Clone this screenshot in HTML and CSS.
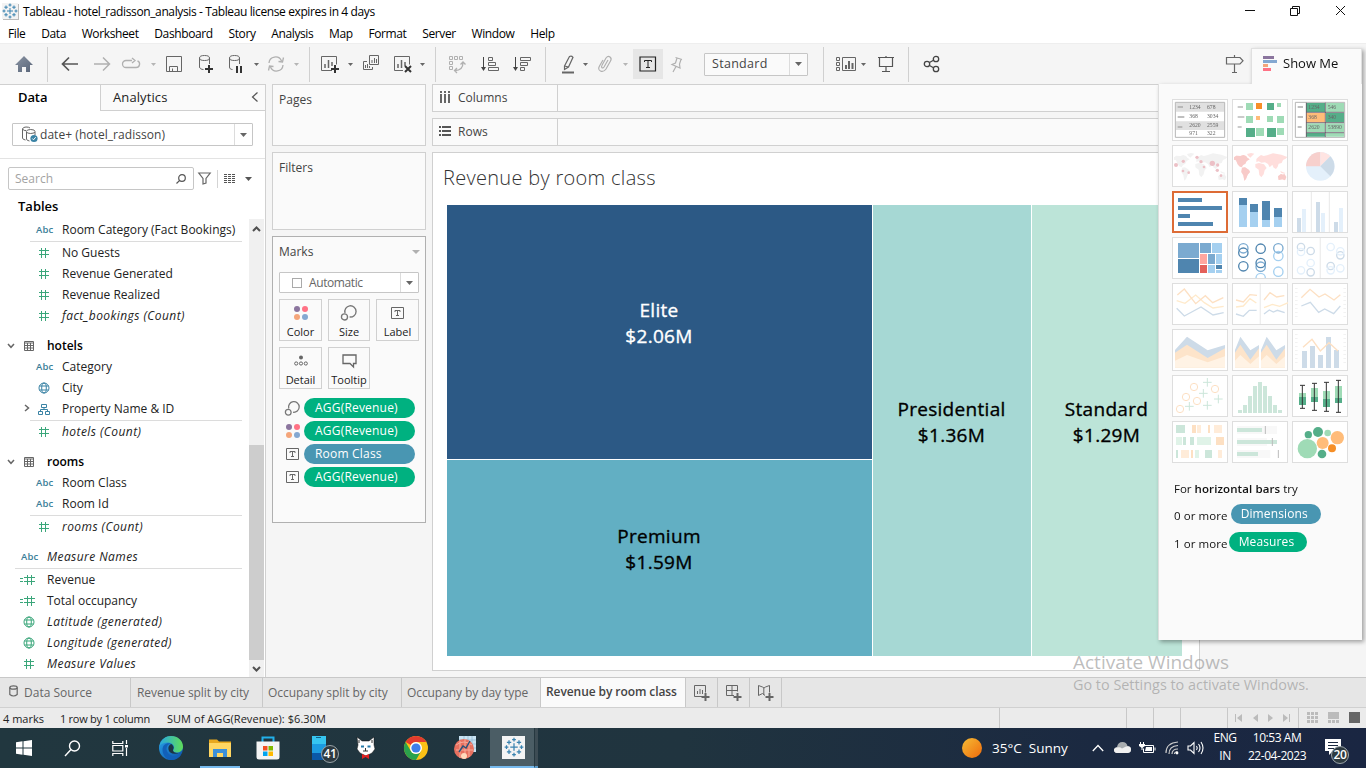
FILE: index.html
```html
<!DOCTYPE html>
<html lang="en">
<head>
<meta charset="utf-8">
<title>Tableau - hotel_radisson_analysis</title>
<link rel="stylesheet" href="styles.css">
</head>
<body>
<svg class="defs" width="0" height="0">
  <defs>
    <linearGradient id="edgeA" x1="0" y1="0" x2="1" y2="1"><stop offset="0" stop-color="#2aa5e8"/><stop offset="1" stop-color="#0c4fa8"/></linearGradient>
    <linearGradient id="edgeB" x1="0" y1="0" x2="1" y2="0"><stop offset="0" stop-color="#28a8e0"/><stop offset="1" stop-color="#5fdc58"/></linearGradient>
    <linearGradient id="sun" x1="0" y1="0" x2="1" y2="1"><stop offset="0" stop-color="#f6bd35"/><stop offset="1" stop-color="#ef6a0c"/></linearGradient>
    <linearGradient id="homeFill" x1="0" y1="0" x2="1" y2="1"><stop offset="0" stop-color="#8a94a3"/><stop offset="1" stop-color="#586478"/></linearGradient>
    <symbol id="caret" viewBox="0 0 5 3"><path d="M0 0h5L2.5 3z" fill="currentColor"/></symbol>
    <symbol id="caret-lg" viewBox="0 0 7 4"><path d="M0 0h7L3.500 4z" fill="currentColor"/></symbol>
    <symbol id="hash" viewBox="0 0 12 12"><path d="M1 3.500h10M1 7.500h10M3.500 1v10M7.500 1v10" stroke="#3aa67a" fill="none"/></symbol>
    <symbol id="calc" viewBox="0 0 16 12"><path d="M0 4.500h3M0 7.500h3M4 3.500h11M4 7.500h11M7.500 1v10M11.500 1v10" stroke="#3aa67a" fill="none"/></symbol>
    <symbol id="globe" viewBox="0 0 12 12"><g fill="none" stroke="currentColor"><circle cx="6" cy="6" r="5"/><ellipse cx="6" cy="6" rx="2.300" ry="5"/><path d="M1.500 4h9M1.500 8h9"/></g></symbol>
    <symbol id="table" viewBox="0 0 10 10"><path d="M.5.5h9v9h-9zM.5 2h9M.5 4.500h9M.5 7h9M3.500 2v7.500M6.500 2v7.500" fill="none" stroke="#666"/></symbol>
    <symbol id="chev" viewBox="0 0 8 6"><path d="M1 1l3 3.300L7 1" fill="none" stroke="#666" stroke-width="1.500"/></symbol>
    <symbol id="sizeicon" viewBox="0 0 16 16"><g fill="none" stroke="#777" stroke-width="1.200"><path d="M4.500 8A5 5 0 1 1 8.500 11.500"/><circle cx="4" cy="11.500" r="2.700"/></g></symbol>
    <symbol id="dots" viewBox="0 0 16 16"><circle cx="4" cy="4" r="3" fill="#8b759e"/><circle cx="12" cy="4" r="3" fill="#ff7285"/><circle cx="4" cy="12" r="3" fill="#f4a57a"/><circle cx="12" cy="12" r="3" fill="#84a8d1"/></symbol>
    <symbol id="tbox" viewBox="0 0 14 12"><path d="M.5.5h12v11h-12zM4 5V3.500h5V5M6.500 3.500v5M5 8.500h3" fill="none" stroke="#666"/></symbol>
    <symbol id="tablogo" viewBox="0 0 16 16"><path d="M8 5v6M5 8h6M8 .5v3M6.500 2h3M8 12.500v3M6.500 14h3M.5 8h3M2 6.500v3M12.500 8h3M14 6.500v3M4 2.500v3.500M2.300 4.200h3.500M12 2.500v3.500M10.200 4.200h3.500M4 10v3.500M2.300 11.800h3.500M12 10v3.500M10.200 11.800h3.500" stroke="#3a83b0" fill="none"/></symbol>
    <symbol id="world" viewBox="0 0 168 126"><path d="M6 37l7-5 12 1 9-3 8 3 4 5 7 5-9 5-4 8-7 4-4 7-7-3-5-6-5-12-6-2zM45 27l12-3 10 2-7 7-5 5-7-6zM30 68l9-1 12 8 3 6-7 8-5 13-5 5-3-16-6-10zM73 42l6-6 8-6 8 3 10-2 18-6 25 4 18 7-5 5-8 4-4 9-9 2-3 9-5 7-7-4-4-9-8 8-5-10-9-5-11 1-8-4-7 2zM70 57l11-3 15 4 8 11-6 7-3 12-7 9-6-7-2-16-10-7zM145 77l5 3 10 4-3 2-10-3zM138 94l9-7 6 2 4-2 6 9-4 10-8-3-11 2z" fill="currentColor"/></symbol>
  </defs>
</svg>

<div class="app">
  <header class="titlebar">
    <svg class="app-logo" width="16" height="16"><use href="#tablogo"/></svg>
    <span class="window-title">Tableau - hotel_radisson_analysis - Tableau license expires in 4 days</span>
    <svg class="win-controls" width="112" height="20" fill="none" stroke="#111"><path d="M5 9.500h10M50.500 7.500h7v7h-7zM52.500 7.500v-2h7v7h-2M96 5l9 9M105 5l-9 9"/></svg>
  </header>
  <nav class="menubar"><span>File</span><span>Data</span><span>Worksheet</span><span>Dashboard</span><span>Story</span><span>Analysis</span><span>Map</span><span>Format</span><span>Server</span><span>Window</span><span>Help</span></nav>

  <div class="toolbar">
    <svg width="18" height="16"><path d="M9 0L18 9h-3v7h-4v-5H7v5H3V9H0z" fill="url(#homeFill)"/></svg>
    <i class="sep"></i>
    <svg width="18" height="16" fill="none" stroke="#555" stroke-width="1.700"><path d="M17 8H2M8 1.500L1.500 8L8 14.500"/></svg>
    <svg width="18" height="16" fill="none" stroke="#b0b0b0" stroke-width="1.500"><path d="M1 8h15M10 1.500L16.500 8L10 14.500"/></svg>
    <svg width="20" height="14" fill="none" stroke="#b0b0b0" stroke-width="1.300"><path d="M11 3.500H5a3.500 3.500 0 0 0 0 7h10a3.500 3.500 0 0 0 1.500-6.700M11 1l3 2.500L11 6"/></svg>
    <svg class="off" width="5" height="3"><use href="#caret"/></svg>
    <svg width="17" height="17" fill="none" stroke="#666"><path d="M.5.5h15v15h-15zM3.500 15.500v-5h8v5M6.500 12.500v3"/></svg>
    <svg width="16" height="20" fill="none" stroke="#666"><ellipse cx="7.500" cy="4" rx="5" ry="2.500"/><path d="M2.500 4v9c0 1.500 2 2.500 4 2.500M12.500 4v6"/><path d="M12 11v8M8 15h8" stroke="#333" stroke-width="2"/></svg>
    <svg width="16" height="20" fill="none" stroke="#666"><ellipse cx="7.500" cy="4" rx="5" ry="2.500"/><path d="M2.500 4v9c0 1.500 1 2.500 3 2.500M12.500 4v6"/><path d="M10 12v7M14 12v7" stroke="#333" stroke-width="2"/></svg>
    <svg width="5" height="3"><use href="#caret"/></svg>
    <svg width="18" height="16" fill="none" stroke="#b0b0b0" stroke-width="1.300"><path d="M2 7a6.500 6.500 0 0 1 12.500-2M16 9a6.500 6.500 0 0 1-12.500 2M16.500 1.500L15.500 6l-4-.5M1.500 14.500l1-4.500 4 .5"/></svg>
    <svg class="off" width="5" height="3"><use href="#caret"/></svg>
    <i></i><i class="sep"></i><i></i>
    <svg width="20" height="18" fill="none" stroke="#666"><path d="M12 15.500H1.500v-14h15v8"/><path d="M5 9v4M8.500 5v8M12 7v4" stroke-width="1.500"/><path d="M15 10v8M11 14h8" stroke="#333" stroke-width="2"/></svg>
    <svg width="5" height="3"><use href="#caret"/></svg>
    <svg width="18" height="18" fill="none" stroke="#666"><path d="M7.500.5h9v9h-9zM5 6.500H1.500v8h9V12M10 5v3M12.500 3v5M14.500 4v4M3.500 10v3M5.500 9v4M7.500 11v2"/></svg>
    <svg width="20" height="18" fill="none" stroke="#666"><path d="M10 15.500H1.500v-14h15v8"/><path d="M5 9v4M8.500 5v8M12 7v4" stroke-width="1.500"/><path d="M12 11l6 6M18 11l-6 6" stroke="#333" stroke-width="2"/></svg>
    <svg width="5" height="3"><use href="#caret"/></svg>
    <i></i><i class="sep"></i>
    <svg width="18" height="18" fill="none" stroke="#b0b0b0"><path d="M1.500 1.500h3v3h-3zM6.500 1.500h3v3h-3zM11.500 1.500h3v3h-3zM1.500 6.500h3v3h-3zM1.500 11.500h3v3h-3z"/><path d="M15 7.500q0 8-8 8M12.500 9.500L15 7l2.500 2.500M9 13l-2.500 2.500L9 18" stroke-width="1.300"/></svg>
    <svg width="18" height="18" fill="none" stroke="#666"><path d="M2.500 2v12" stroke="#444"/><path d="M0 12h5l-2.500 4z" fill="#444" stroke="none"/><path d="M7.500 2.500h4v3h-4zM7.500 7.500h7v3h-7zM7.500 12.500h10v3h-10z"/></svg>
    <svg width="18" height="18" fill="none" stroke="#666"><path d="M2.500 2v12" stroke="#444"/><path d="M0 12h5l-2.500 4z" fill="#444" stroke="none"/><path d="M7.500 2.500h10v3h-10zM7.500 7.500h7v3h-7zM7.500 12.500h4v3h-4z"/></svg>
    <i></i><i class="sep"></i><i></i>
    <svg width="14" height="19" fill="none" stroke="#666" stroke-width="1.200"><path d="M3.500 11L8.500 1.500q2-1 3.500.8L7.500 12l-4 2.500zM3.500 11l4 1"/><path d="M1 17.500h12" stroke-width="2"/></svg>
    <svg width="5" height="3"><use href="#caret"/></svg>
    <svg width="14" height="18" fill="none" stroke="#b0b0b0" stroke-width="1.200"><path d="M10 5l-4 7q-1 1.500-2 .7t0-2.500L8 3q2-2.500 4-1t.5 4L8 14q-2.500 3.500-5.500 2t-1-5L5 5"/></svg>
    <svg class="off" width="5" height="3"><use href="#caret"/></svg>
    <i></i>
    <div class="label-toggle"><svg width="18" height="16" fill="none" stroke="#222"><path d="M1 1h15.500v14H1z" stroke-width="1.200"/><path d="M5.500 6V4.500h7V6M9 4.500v7M7 11.500h4"/></svg></div>
    <svg width="14" height="17" fill="none" stroke="#b0b0b0" stroke-width="1.200"><path d="M5.500 1.500l6.500 2M7 2L5.500 7 2 8.500l8 3.500-.5-4L11 3.500M6 10.500L3 16"/></svg>
    <i></i>
    <div class="combo fit-combo"><span>Standard</span><b><svg width="7" height="4"><use href="#caret-lg"/></svg></b></div>
    <i></i><i class="sep"></i><i></i>
    <svg width="21" height="16" fill="none" stroke="#666"><path d="M.5 1.500h3v3h-3zM.5 6.500h3v3h-3zM.5 11.500h3v3h-3zM6.500 1.500h13v13h-13z"/><path d="M10 9v4M13 5v8M16.500 7v6" stroke-width="2"/></svg>
    <svg width="5" height="3"><use href="#caret"/></svg>
    <svg width="18" height="17" fill="none" stroke="#555"><path d="M1 1.500h16M2.500 1.500v9h13v-9M9 10.500v5M5 15.500h8M9 0v1" stroke-width="1.200"/></svg>
    <i class="sep"></i>
    <svg width="16" height="18" fill="none" stroke="#444" stroke-width="1.300"><circle cx="4" cy="9" r="2.700"/><circle cx="13" cy="4" r="2.700"/><circle cx="13" cy="14" r="2.700"/><path d="M6.500 7.500l4-2.200M6.500 10.500l4 2.200"/></svg>
    <i></i>
    <svg width="20" height="20" fill="none" stroke="#666" stroke-width="1.200"><path d="M1.500 3.500H15l3 3.300-3 3.200H1.500zM9.500 1v2.500M9.500 10v8.500M7 18.500h5"/></svg>
  </div>

  <main class="workspace">
    <aside class="data-pane">
      <div class="pane-tabs"><div class="pane-tab current">Data</div><div class="pane-tab">Analytics<svg width="8" height="12" fill="none" stroke="#555" stroke-width="1.200"><path d="M6.500 1.500L1.500 6l5 4.500"/></svg></div></div>
      <div class="source-zone">
        <div class="combo source-combo">
          <svg width="18" height="17" fill="none" stroke="#666"><path d="M1.500 3v9q0 1.500 3 2M1.500 3Q2 1 5 1t4 1M1.500 3Q3 5 5 4.500M5.500 6v7q0 1.500 3 2M14 6v3"/><ellipse cx="9.700" cy="5.500" rx="4.300" ry="2"/><circle cx="13" cy="12.500" r="3.600" fill="#3a83a5" stroke="none"/><path d="M11.300 12.500l1.200 1.300 2.200-2.600" stroke="#fff"/></svg>
          <span>date+ (hotel_radisson)</span><b><svg width="7" height="4"><use href="#caret-lg"/></svg></b>
        </div>
      </div>
      <div class="search-row">
        <div class="search-box">Search<svg width="10" height="10" fill="none" stroke="#555" stroke-width="1.200"><circle cx="6" cy="4" r="3.300"/><path d="M3.700 6.300L.5 9.500"/></svg></div>
        <svg width="13" height="13" fill="none" stroke="#666" stroke-width="1.200"><path d="M.8 1h11.400L8 6.500V11l-3 1V6.500z"/></svg>
        <i></i>
        <svg width="12" height="10" stroke="#555" stroke-dasharray="3 1"><path d="M0 .5h12"/><path d="M0 2.500h12"/><path d="M0 4.500h12"/><path d="M0 6.500h12"/><path d="M0 8.500h12"/></svg>
        <svg class="view-caret" width="7" height="4"><use href="#caret-lg"/></svg>
      </div>
      <h3>Tables</h3>
      <div class="list-zone">
        <div class="field-list">
          <div class="field"><em>Abc</em><span>Room Category (Fact Bookings)</span></div>
          <div class="rule"></div>
          <div class="field"><em><svg width="12" height="12"><use href="#hash"/></svg></em><span>No Guests</span></div>
          <div class="field"><em><svg width="12" height="12"><use href="#hash"/></svg></em><span>Revenue Generated</span></div>
          <div class="field"><em><svg width="12" height="12"><use href="#hash"/></svg></em><span>Revenue Realized</span></div>
          <div class="field gen"><em><svg width="12" height="12"><use href="#hash"/></svg></em><span>fact_bookings (Count)</span></div>
          <div class="group"><svg width="8" height="6"><use href="#chev"/></svg><svg width="10" height="10"><use href="#table"/></svg><span>hotels</span></div>
          <div class="field"><em>Abc</em><span>Category</span></div>
          <div class="field"><em class="dim"><svg width="12" height="12"><use href="#globe"/></svg></em><span>City</span></div>
          <div class="field"><svg class="expander" width="6" height="8" fill="none" stroke="#666" stroke-width="1.500"><path d="M1 1l3.500 3L1 7"/></svg><em class="dim"><svg width="12" height="12" fill="none" stroke="currentColor"><path d="M3.500 1.500h5v3h-5zM.5 8.500h4v3h-4zM7.500 8.500h4v3h-4zM6 4.500v2M2.500 8.500v-2h7v2"/></svg></em><span>Property Name &amp; ID</span></div>
          <div class="rule"></div>
          <div class="field gen"><em><svg width="12" height="12"><use href="#hash"/></svg></em><span>hotels (Count)</span></div>
          <div class="group"><svg width="8" height="6"><use href="#chev"/></svg><svg width="10" height="10"><use href="#table"/></svg><span>rooms</span></div>
          <div class="field"><em>Abc</em><span>Room Class</span></div>
          <div class="field"><em>Abc</em><span>Room Id</span></div>
          <div class="rule"></div>
          <div class="field gen"><em><svg width="12" height="12"><use href="#hash"/></svg></em><span>rooms (Count)</span></div>
          <div class="loose">
            <div class="field gen"><em>Abc</em><span>Measure Names</span></div>
            <div class="rule"></div>
            <div class="field"><em><svg class="calc" width="16" height="12"><use href="#calc"/></svg></em><span>Revenue</span></div>
            <div class="field"><em><svg class="calc" width="16" height="12"><use href="#calc"/></svg></em><span>Total occupancy</span></div>
            <div class="field gen"><em class="mea"><svg width="12" height="12"><use href="#globe"/></svg></em><span>Latitude (generated)</span></div>
            <div class="field gen"><em class="mea"><svg width="12" height="12"><use href="#globe"/></svg></em><span>Longitude (generated)</span></div>
            <div class="field gen"><em><svg width="12" height="12"><use href="#hash"/></svg></em><span>Measure Values</span></div>
          </div>
        </div>
        <div class="scrollbar"><svg width="9" height="6" fill="none" stroke="#505050" stroke-width="2"><path d="M1 5l3.500-3.500L8 5"/></svg><div class="thumb"></div><svg width="9" height="6" fill="none" stroke="#505050" stroke-width="2"><path d="M1 1l3.500 3.500L8 1"/></svg></div>
      </div>
    </aside>

    <section class="cards">
      <div class="card pages">Pages</div>
      <div class="card filters">Filters</div>
      <div class="card marks">
        <div class="marks-head">Marks<svg width="8" height="4"><path d="M0 0h8L4 4z" fill="#b0b0b0"/></svg></div>
        <div class="combo mark-type"><i></i><span>Automatic</span><b><svg width="7" height="4"><use href="#caret-lg"/></svg></b></div>
        <div class="mark-grid">
          <div><svg width="16" height="16"><use href="#dots"/></svg>Color</div>
          <div><svg width="18" height="18"><use href="#sizeicon"/></svg>Size</div>
          <div><svg width="14" height="12"><use href="#tbox"/></svg>Label</div>
          <div><svg width="14" height="12" fill="none" stroke="#666"><circle cx="7" cy="2.500" r="2" fill="#666" stroke="none"/><circle cx="2.200" cy="8.500" r="1.600"/><circle cx="7" cy="8.500" r="1.600"/><circle cx="11.800" cy="8.500" r="1.600"/></svg>Detail</div>
          <div><svg width="15" height="14" fill="none" stroke="#666" stroke-width="1.300"><path d="M1 1h13v8.500h-2.500V13L8 9.500H1z"/></svg>Tooltip</div>
        </div>
        <div class="pill-list">
          <div><svg width="17" height="17"><use href="#sizeicon"/></svg><span class="pill green">AGG(Revenue)</span></div>
          <div><svg width="16" height="16"><use href="#dots"/></svg><span class="pill green">AGG(Revenue)</span></div>
          <div><svg width="14" height="12"><use href="#tbox"/></svg><span class="pill blue">Room Class</span></div>
          <div><svg width="14" height="12"><use href="#tbox"/></svg><span class="pill green">AGG(Revenue)</span></div>
        </div>
      </div>
    </section>

    <section class="canvas">
      <div class="shelf"><div><svg width="12" height="13" fill="none" stroke="#666" stroke-width="2"><path d="M2 0v2M6 0v2M10 0v2M2 3v9M6 3v9M10 3v9"/></svg>Columns</div></div>
      <div class="shelf"><div><svg width="12" height="12" fill="none" stroke="#555" stroke-width="2"><path d="M0 1h2M0 5h2M0 9h2M3 1h9M3 5h9M3 9h9"/></svg>Rows</div></div>
      <div class="sheet">
        <h1>Revenue by room class</h1>
        <div class="treemap">
          <div class="tile elite">Elite<br>$2.06M</div>
          <div class="tile presidential">Presidential<br>$1.36M</div>
          <div class="tile standard">Standard<br>$1.29M</div>
          <div class="tile premium">Premium<br>$1.59M</div>
        </div>
      </div>
    </section>
  </main>

  <div class="sheet-tabs">
    <div class="stab source"><svg width="9" height="12" fill="none" stroke="#666" stroke-width="1.200"><ellipse cx="4.500" cy="2.500" rx="3.700" ry="1.700"/><path d="M.8 2.500v7q3.700 3 7.400 0v-7"/></svg>Data Source</div>
    <div class="stab t1">Revenue split by city</div>
    <div class="stab t2">Occupany split by city</div>
    <div class="stab t3">Occupany by day type</div>
    <div class="stab active">Revenue by room class</div>
    <div class="stab add"><svg width="16" height="16" fill="none" stroke="#666"><path d="M8 11.500H.5V.500h11v7M3.500 6v3M6 4v5M8.500 5v4"/><path d="M11.500 8v8M7.500 12h8" stroke-width="2"/></svg></div>
    <div class="stab add"><svg width="16" height="16" fill="none" stroke="#666"><path d="M8 10.500H.5V.500h11v6M6 .5v10M.5 5.500h11"/><path d="M11.500 8v8M7.500 12h8" stroke-width="2"/></svg></div>
    <div class="stab add"><svg width="16" height="16" fill="none" stroke="#666"><path d="M7 10.500l-2.500-2-4 2V.5l4 1.500L6 3l1.500-1 4-1.500v7M5.800 3v7"/><path d="M11.500 8v8M7.500 12h8" stroke-width="2"/></svg></div>
  </div>

  <div class="statusbar">
    <span class="s1">4 marks</span><span class="s2">1 row by 1 column</span><span class="s3">SUM of AGG(Revenue): $6.30M</span>
    <div class="status-cells"><i></i><i></i><i></i><i></i>
      <div class="nav"><svg width="58" height="8" fill="#bbb"><path d="M1 0h1v8H1zM8 0v8L3 4zM24 0v8l-5-4zM34 0v8l5-4zM49 0v8l5-4zM55 0h1v8h-1z"/></svg></div>
      <div class="views"><svg width="52" height="12"><path d="M0 0h3v3H0zM4 0h3v3H4zM8 0h3v3H8zM0 4h3v3H0zM4 4h3v3H4zM8 4h3v3H8zM0 8h3v3H0zM4 8h3v3H4zM8 8h3v3H8zM21 0h11v7H21zM21 8h3v3h-3zM25 8h3v3h-3zM29 8h3v3h-3z" fill="#bbb"/><path d="M42 0h11v11H42z" fill="#666"/></svg></div>
    </div>
  </div>

  <footer class="taskbar">
    <div class="task"><svg width="16" height="16" fill="#fff"><path d="M0 2.200L6.500 1.300v6.200H0zM7.500 1.200L16 0v7.500H7.500zM0 8.500h6.500v6.200L0 13.800zM7.500 8.500H16V16l-8.500-1.200z"/></svg></div>
    <div class="task"><svg width="17" height="17" fill="none" stroke="#fff" stroke-width="1.400"><circle cx="10.500" cy="6" r="5"/><path d="M7 9.500L1 16"/></svg></div>
    <div class="task"><svg width="17" height="17" fill="none" stroke="#fff" stroke-width="1.200"><path d="M.8 1v2.500h10V1M.8 16v-2.500h10V16M.8 5.500h10V11H.8zM14.500 0v4M14.500 8v8"/><path d="M14.500 5v2.500" stroke-width="3"/></svg></div>
    <div class="task"><svg width="26" height="26" viewBox="0 0 26 26"><circle cx="13" cy="13" r="12" fill="url(#edgeA)"/><path d="M1.500 11C3 4 8 1 13 1c7 0 12 5 12 10.500 0 4-3 6-6.500 6-3 0-4-1.500-3-3 2-3-1-7-5.500-7-4 0-7 1.500-8.500 3.500z" fill="url(#edgeB)"/><path d="M8.500 14c0-3 2-5 4-5.500-4-1-8 1-8 6.500 0 5 4 9.500 8.500 10 4 0 8-2 10-5-7 3-14 0-14.500-6z" fill="#1260b8"/><path d="M13 9c-2 1-3 3-2.500 5.500C11 18 15 20 22 18c-3 .5-7-.5-7-2.500s1-2 .5-3.500S14 9 13 9z" fill="#1c3543"/></svg></div>
    <div class="task run"><svg width="22" height="20"><path d="M0 1.500h8l2 2h12V18H0z" fill="#e8a81e"/><path d="M0 5h22v14H0z" fill="#ffd662"/><path d="M4 11h14v8h-4v-4H8v4H4z" fill="#3c8fd8"/></svg></div>
    <div class="task"><svg width="24" height="24"><path d="M6.500 6V1.500h11V6" stroke="#22b0ea" stroke-width="2" fill="none"/><path d="M.5 5.500h23V21q0 2.500-2.500 2.500H3Q.5 23.500.5 21z" fill="#f4f4f4"/><path d="M7 10h4.500v4.500H7z" fill="#f25022"/><path d="M12.500 10H17v4.500h-4.500z" fill="#7fba00"/><path d="M7 15.500h4.500V20H7z" fill="#00a4ef"/><path d="M12.500 15.500H17V20h-4.500z" fill="#ffb900"/></svg></div>
    <div class="task"><svg width="16" height="24"><path d="M1 0h14v12H1z" fill="#36c5f0"/><path d="M1 8h14v9H1z" fill="#1c9be0"/><path d="M1 17h14v7H1z" fill="#0a58a8"/><path d="M5 1.500h5" stroke="#126088"/></svg><b class="count">41</b></div>
    <div class="task"><svg width="20" height="22"><path d="M1 0l5 4h7l5-4v8l1 4-3 4-6 3-6-3-3-4 1-4z" fill="#fff" stroke="#111" stroke-width=".5"/><path d="M3 3v3M16 3v3M9.500 11v3M7 14h5" stroke="#333"/><path d="M5 9.500h3M11.500 9.500h3" stroke="#267baa" stroke-width="2"/><path d="M6 17l3.500 1.500L13 17v5l-3.500-2L6 22z" fill="#e32020"/></svg></div>
    <div class="task"><svg width="24" height="24"><circle cx="12" cy="12" r="12" fill="#fbc116"/><path d="M1.600 6A12 12 0 0 1 22.400 6H12a6 6 0 0 0-5.200 3z" fill="#e33b2e"/><path d="M1.600 6A12 12 0 0 0 12 24l5.200-9A6 6 0 0 1 6.800 15z" fill="#2ba24c"/><circle cx="12" cy="12" r="6" fill="#fff"/><circle cx="12" cy="12" r="4.600" fill="#3f7fe8"/></svg></div>
    <div class="task"><svg width="24" height="24"><path d="M6 0h17v16H6z" fill="#c8e2f2"/><path d="M6 4h17M6 8h17M6 12h17M11 0v16M15 0v16M19 0v16" stroke="#8cb4d0" stroke-width=".7"/><circle cx="11" cy="13" r="10" fill="#e8705f"/><path d="M3 9q8-6 16 0M3 14h17M7 5v17M12 3v20M16 5v16" stroke="#f6aa9a" fill="none"/><circle cx="11" cy="20" r="3" fill="#ffd9bc"/><path d="M6 16l4-6 3 2 4-7" stroke="#29547c" stroke-width="1.500" fill="none"/></svg></div>
    <div class="task front"><div class="tab-tile"><svg width="20" height="20"><use href="#tablogo"/></svg></div></div><i class="stack"></i>
    <div class="tray">
      <svg class="sun" width="20" height="20"><circle cx="10" cy="10" r="10" fill="url(#sun)"/></svg>
      <span class="weather">35°C&nbsp; Sunny</span>
      <svg class="t-up" width="12" height="8" fill="none" stroke="#fff" stroke-width="1.300"><path d="M.8 7L6 1.500 11.200 7"/></svg>
      <svg class="t-cloud" width="17" height="12"><path d="M3 11q-3-.5-3-3t3-3q1-5 5.500-5 4 0 5 4 3.500.5 3.500 3.500T14 11z" fill="#a9adb0"/><path d="M3 11q-3-.5-3-3 0-2 3-2.500 3-1 5 1l4-2q5-1 5 3 0 3-3 3.500z" fill="#f0f0f0"/></svg>
      <svg class="t-bat" width="17" height="12" fill="none" stroke="#fff"><path d="M5 3.500h9.500v7h-10v-4M16 5.500v3M1.500 0v2M4.500 0v2M3 5v3"/><path d="M0 2h6v2L3 6 0 4zM7 5h6v4H6z" fill="#fff" stroke="none"/></svg>
      <svg class="t-wifi" width="14" height="14" fill="none" stroke="#ccc" stroke-width="1.200"><path d="M1 12Q1 2 13 1M4 13Q4 5 13 4.500M7 13q0-5 6-5M9.500 13q0-2 3-2.500"/><circle cx="12" cy="12" r="1.400" fill="#fff" stroke="none"/></svg>
      <svg class="t-vol" width="18" height="14" fill="none" stroke="#fff" stroke-width="1.100"><path d="M1 5h2.500L7 1.500v11L3.500 9H1zM9.500 5q1.500 2 0 4M11.500 3q3 4 0 8M14 1q4 6 0 12"/></svg>
      <div class="lang">ENG<br>IN</div>
      <div class="clock">10:53 AM<br>22-04-2023</div>
      <div class="notes"><svg width="18" height="18"><path d="M0 0h16v12H8l-4 4v-4H0z" fill="#fff"/><path d="M3 3.500h10M3 6.500h10M3 9.500h6" stroke="#1b2940"/></svg><b class="count">20</b></div>
    </div>
  </footer>

  <section class="show-me">
    <div class="sm-tab"><svg width="15" height="16"><path d="M0 0h11v3H0z" fill="#8b759e"/><path d="M0 4h14v3H0z" fill="#84a8d1"/><path d="M0 8h5v3H0z" fill="#f4a57a"/><path d="M0 12h8v3H0z" fill="#ff7285"/></svg>Show Me</div>
    <div class="sm-body">
      <div class="thumbs">
        <svg viewBox="51 177 168 126"><path d="M61 187h148v105H61z" fill="#fff" stroke="#b5b5b5" stroke-width="3"/><path d="M63 189h144v26H63zM63 244h144v26H63z" fill="#e0e0e0"/><path d="M68 201h16M68 231h20M68 261h14" stroke="#aaa" stroke-width="5"/><g class="tiny"><text x="103" y="207">1234</text><text x="156" y="207">678</text><text x="103" y="235">368</text><text x="156" y="235">3034</text><text x="103" y="262">2620</text><text x="156" y="262">2559</text><text x="103" y="286">971</text><text x="156" y="286">322</text></g></svg>
        <svg viewBox="231 177 168 126"><path d="M248 201h16M248 231h20M248 261h12" stroke="#bbb" stroke-width="4"/><path d="M273 189h21v21h-21zM366 189h12v12h-12zM273 228h21v21h-21zM336 228h18v18h-18zM366 228h21v21h-21zM303 264h24v24h-24zM366 264h21v21h-21z" fill="#9fdbb6"/><path d="M336 189h21v21h-21zM273 264h27v27h-27zM336 264h27v27h-27z" fill="#55ae89"/><path d="M303 189h18v18h-18z" fill="#f68f27"/><path d="M303 228h12v12h-12z" fill="#ffbc79"/></svg>
        <svg viewBox="411 177 168 126"><path d="M421 187h148v105H421z" fill="#fff" stroke="#b5b5b5" stroke-width="3"/><path d="M453 189h57v27h-57zM513 219h54v28h-54zM453 279h57v11h-57z" fill="#55ae89"/><path d="M513 189h54v27h-54zM453 250h57v26h-57zM513 250h54v26h-54zM513 279h54v11h-54z" fill="#9fdbb6"/><path d="M453 219h57v28h-57z" fill="#ffbc79"/><path d="M511 188v103M453 217h114M453 248h114M453 278h114M454 188v103" stroke="#656" stroke-width="2.500"/><path d="M428 201h16M428 231h16M428 261h12" stroke="#aaa" stroke-width="4"/><g class="tiny"><text x="460" y="207">1234</text><text x="518" y="207">546</text><text x="460" y="238">368</text><text x="518" y="238">340</text><text x="460" y="267">2620</text><text x="518" y="267">53890</text></g></svg>
        <svg class="map-gray" viewBox="0 0 168 126"><use href="#world"/><g fill="#ecc0c6"><circle cx="12" cy="60" r="6"/><circle cx="34" cy="49" r="5"/><circle cx="75" cy="37" r="5"/><circle cx="87" cy="50" r="5"/><circle cx="121" cy="55" r="8"/><circle cx="137" cy="60" r="5"/><circle cx="136" cy="76" r="5"/><circle cx="147" cy="92" r="4"/><circle cx="33" cy="78" r="4"/><circle cx="50" cy="83" r="4"/><circle cx="96" cy="66" r="4"/></g></svg>
        <svg class="map-pink" viewBox="0 0 168 126"><use href="#world"/><path d="M6 37l7-5 12 1 9-3 8 3 4 5 7 5-9 5-4 8-7 4-4 7-7-3-5-6-5-12-6-2zM30 68l9-1 12 8 3 6-7 8-5 13-5 5-3-16-6-10zM138 94l9-7 6 2 4-2 6 9-4 10-8-3-11 2z" fill="#f8cbc9"/></svg>
        <svg viewBox="411 315 168 126"><circle cx="496" cy="379" r="43" fill="#e4f0fb"/><path d="M496 379h-43a43 43 0 0 1 43-43z" fill="#f7d0cd"/><path d="M496 379v-43a43 43 0 0 1 30 13z" fill="#ffe4e2"/><path d="M496 379l30-30a43 43 0 0 1 0 60z" fill="#cddbe8"/></svg>
        <svg class="selected" viewBox="51 453 168 126"><path d="M69 474h72v12H69zM69 498h132v12H69zM69 522h36v12H69zM69 546h105v12H69z" fill="#4f85af"/></svg>
        <svg viewBox="231 453 168 126"><path d="M252 495h24v66h-24zM285 516h24v45h-24zM321 540h24v21h-24zM357 531h24v30h-24z" fill="#a5d0f0"/><path d="M252 474h24v21h-24zM285 492h24v24h-24zM321 483h24v57h-24zM357 504h24v27h-24z" fill="#4f85af"/></svg>
        <svg viewBox="411 453 168 126"><path d="M469 456v120M523 456v120" stroke="#e8e8e8" stroke-width="3"/><path d="M426 534h12v42h-12zM483 486h12v90h-12zM537 546h12v30h-12z" fill="#cddbe8"/><path d="M441 507h12v69h-12zM498 519h12v57h-12zM552 504h12v72h-12z" fill="#e4f0fb"/></svg>
        <svg viewBox="51 21 168 126"><path d="M69 39h63v45H69zM135 39h33v30h-33zM159 72h21v30h-21z" fill="#7baad0"/><path d="M69 87h63v42H69zM183 105h18v12h-18z" fill="#4f85af"/><path d="M171 39h30v30h-30zM183 72h18v30h-18zM159 105h21v24h-21zM183 120h18v9h-18z" fill="#a5d0f0"/><path d="M135 72h21v30h-21z" fill="#ffa69f"/><path d="M135 105h21v24h-21z" fill="#e3605a"/></svg>
        <svg class="rings" viewBox="231 21 168 126"><g stroke="#7baad0"><circle cx="265" cy="55" r="14"/><circle cx="370" cy="55" r="14"/><circle cx="317" cy="110" r="14"/></g><g stroke="#4f85af"><circle cx="265" cy="68" r="14"/><circle cx="265" cy="109" r="14"/><circle cx="317" cy="56" r="14"/><circle cx="317" cy="99" r="14"/></g><g stroke="#a5d0f0"><circle cx="370" cy="78" r="14"/><circle cx="370" cy="125" r="14"/><path d="M303 144a14 14 0 0 1 28 0"/></g></svg>
        <svg class="rings" viewBox="411 21 168 126"><path d="M496 24v120" stroke="#eee"/><g stroke="#cddbe8"><circle cx="438" cy="51" r="11"/><circle cx="467" cy="63" r="11"/><circle cx="467" cy="127" r="11"/><circle cx="556" cy="76" r="11"/><circle cx="527" cy="108" r="11"/></g><g stroke="#e4f0fb"><circle cx="438" cy="66" r="11"/><circle cx="438" cy="121" r="11"/><circle cx="467" cy="99" r="11"/><circle cx="527" cy="51" r="11"/><circle cx="556" cy="64" r="11"/><circle cx="527" cy="121" r="11"/><circle cx="556" cy="115" r="11"/></g></svg>
        <svg class="lines" viewBox="51 159 168 126"><path d="M65 212l25 8 32-25 26 23 26 16 32-5" stroke="#ffeacb"/><path d="M67 195l21-18 34 44 29-24 22 21 32-15" stroke="#fde0c3"/><path d="M65 235l23 23 50-27 36 24 32-7" stroke="#cddbe8"/></svg>
        <svg class="lines" viewBox="231 159 168 126"><path d="M316 162v120" stroke="#eee"/><path d="M243 231l22-3 20-22 19 13M327 233l25-10 22 6 28-12" stroke="#ffeacb"/><path d="M243 210l22 6 20-22 21 2M327 210l18-22 20 13 23-4" stroke="#fde0c3"/><path d="M243 252l22 7 18-18h22M327 252l16-12 12 6 12-5 22 7" stroke="#cddbe8"/></svg>
        <svg class="lines" viewBox="411 159 168 126"><path d="M439 203l26-25 27 23 18-9 27 18 19-16" stroke="#fde0c3"/><path d="M439 228l27-11 25 30 18-10 27 14 20-23" stroke="#cddbe8"/><path d="M424 174v95M569 174v95" stroke="#eee" stroke-width="8" stroke-dasharray="2 10"/></svg>
        <svg viewBox="51 297 168 126"><path d="M60 360l36-40 62 41 52-16v68H60z" fill="#cddbe8"/><path d="M60 368l36-24 62 40 52-29v58H60z" fill="#fde4ca"/><path d="M60 392l36-17 62 22 52-18v34H60z" fill="#fff3e5"/></svg>
        <svg viewBox="231 297 168 126"><path d="M240 360l16-40 30 41 26-16v68h-72zM318 360l17-40 29 41 26-16v68h-72z" fill="#cddbe8"/><path d="M240 368l16-24 30 45 26-34v58h-72zM318 368l17-24 29 45 26-34v58h-72z" fill="#fde4ca"/><path d="M240 392l16-17 30 27 26-23v34h-72zM318 392l17-17 29 27 26-23v34h-72z" fill="#fff3e5"/></svg>
        <svg class="lines" viewBox="411 297 168 126"><path d="M441 363h15v51h-15zM465 348h15v66h-15zM489 375h15v39h-15zM513 321h15v93h-15zM537 360h15v54h-15z" fill="#cddbe8"/><path d="M444 352l27-24 25 35 26-25 27 25" stroke="#fde0c3"/><path d="M424 312v95M569 312v95" stroke="#eee" stroke-width="8" stroke-dasharray="2 10"/></svg>
        <svg class="lines" viewBox="51 435 168 126"><g stroke="#fde0c3" stroke-width="3"><circle cx="117" cy="471" r="11"/><circle cx="180" cy="477" r="11"/><circle cx="93" cy="501" r="11"/><circle cx="126" cy="513" r="11"/><circle cx="75" cy="537" r="11"/></g><path d="M144 457h26M157 444v26M132 490h26M145 477v26M177 507h26M190 494v26M90 529h26M103 516v26M144 526h26M157 513v26" stroke="#cce6da" stroke-width="3"/></svg>
        <svg viewBox="231 435 168 126"><path d="M249 540h12v9h-12zM264 525h12v24h-12zM279 498h12v51h-12zM294 468h12v81h-12zM309 456h12v93h-12zM324 468h12v81h-12zM339 498h12v51h-12zM354 525h12v24h-12zM369 540h12v9h-12z" fill="#cce6da"/></svg>
        <svg viewBox="411 435 168 126"><path d="M432 489h21v12h-21zM468 474h21v27h-21zM504 483h21v24h-21zM540 468h21v36h-21z" fill="#9fdbb6"/><path d="M432 501h21v24h-21zM468 501h21v15h-21zM504 507h21v24h-21zM540 504h21v15h-21z" fill="#55ae89"/><path d="M442 466v69M435 466h15M435 535h15M478 460v81M471 460h15M471 541h15M514 457v87M507 457h15M507 544h15M550 451v96M543 451h15M543 547h15" stroke="#333" stroke-width="3"/></svg>
        <svg viewBox="51 573 168 126"><path d="M63 585h27v24H63zM84 621h9v24h-9zM105 621h12v24h-12zM63 660h6v24h-6zM150 660h21v24h-21z" fill="#cce6da"/><path d="M63 621h18v24H63zM126 621h42v24h-42zM120 660h12v24h-12z" fill="#e0f3e8"/><path d="M111 585h12v24h-12zM159 585h6v24h-6zM183 621h24v24h-24zM108 660h6v24h-6z" fill="#fde0c3"/><path d="M126 585h12v24h-12zM177 585h24v24h-24zM78 660h24v24H78zM189 660h12v24h-12z" fill="#ffecd9"/></svg>
        <svg viewBox="231 573 168 126"><path d="M246 588h120v24H246zM246 624h90v24h-90zM246 660h100v24H246z" fill="#f8f8f8"/><path d="M246 594h75v12h-75zM246 630h120v12H246zM246 666h63v12h-63z" fill="#cce6da"/><path d="M331 588v24M352 624v24M370 660v24" stroke="#bbb" stroke-width="3"/></svg>
        <svg viewBox="411 573 168 126"><g fill="#55ae89"><circle cx="460" cy="614" r="11"/><circle cx="489" cy="606" r="15"/><circle cx="501" cy="672" r="13"/></g><g fill="#9fdbb6"><circle cx="457" cy="656" r="29"/><circle cx="518" cy="609" r="10"/></g><g fill="#ffbc79"><circle cx="503" cy="639" r="18"/><circle cx="547" cy="623" r="20"/></g><circle cx="531" cy="655" r="12" fill="#f68f27"/></svg>
      </div>
      <p class="hint">For <strong>horizontal bars</strong> try</p>
      <p class="need">0 or more <span class="chip blue">Dimensions</span></p>
      <p class="need second">1 or more <span class="chip green">Measures</span></p>
    </div>
  </section>
  <div class="activation"><div>Activate Windows</div><p>Go to Settings to activate Windows.</p></div>
</div>
</body>
</html>
```

FILE: styles.css
```css
* { box-sizing: border-box; }
body { margin: 0; font-family: "Open Sans", "Noto Sans", sans-serif; font-size: 12px; color: #222; overflow: hidden; }
svg { display: block; flex: none; overflow: visible; }
.defs { position: absolute; }
.app { position: relative; width: 1366px; height: 768px; display: flex; flex-direction: column; background: #f5f5f5; overflow: hidden; white-space: nowrap; }

.titlebar { height: 22px; background: #fff; display: flex; align-items: center; padding-left: 2px; color: #000; }
.app-logo { background: #f3f3f3; box-shadow: 1px 1px 0 #bbb; }
.window-title { margin-left: 5px; padding-top: 1px; letter-spacing: -.38px; }
.win-controls { margin-left: auto; margin-right: 14px; }
.menubar { height: 21px; background: #fff; display: flex; align-items: center; gap: 15.700px; padding-left: 8px; padding-top: 1px; color: #000; letter-spacing: -.38px; }

.toolbar { height: 41px; border-top: 1px solid #eee; color: #666; display: grid; align-items: center; justify-items: center;
  grid-template-columns: 47px 1px 44px 20px 38px 6px 36px 26px 34px 8px 31px 10px 8px 1px 2px 36px 4px 38px 26px 12px 7px 1px 42px 24px 40px 3px 1px 6px 32px 2px 38px 2px 7px 30px 28px 13px 104px 15px 1px 6px 32px 2px 44px 1px 44px 272px 20px; }
.toolbar .sep { width: 1px; height: 35px; background: #d0d0d0; }
.toolbar .off { color: #b5b5b5; }
.label-toggle { width: 30px; height: 30px; background: #e6e6e6; display: grid; place-items: center; }
.combo { display: flex; align-items: center; background: #fff; border: 1px solid #c6c6c6; border-radius: 1px; color: #444; }
.combo span { flex: 1; }
.combo b { align-self: stretch; display: grid; place-items: center; border-left: 1px solid #dcdcdc; color: #666; width: 18px; }
.fit-combo { width: 104px; height: 23px; padding-left: 7px; background: #fafafa; font-size: 12.500px; letter-spacing: .3px; }
.fit-combo span { padding-bottom: 2px; }

.workspace { height: 593px; display: flex; }
.data-pane { width: 266px; background: #fff; border-right: 1px solid #d0d0d0; border-top: 1px solid #d0d0d0; display: flex; flex-direction: column; }
.pane-tabs { display: flex; height: 26px; font-size: 13px; }
.pane-tab { flex: 1; background: #fafafa; border-left: 1px solid #d0d0d0; border-bottom: 1px solid #d0d0d0; padding: 3px 6px 0 12px; display: flex; justify-content: space-between; line-height: 18px; letter-spacing: .1px; }
.pane-tab svg { margin-top: 3px; }
.pane-tab.current { flex: 0 0 100px; background: #fff; border: 0; padding-left: 18px; font-weight: 600; color: #000; letter-spacing: -.1px; }
.source-zone { height: 48px; padding: 12px 12px 0; border-bottom: 1px solid #e3e3e3; }
.source-combo { height: 23px; padding-left: 8px; }
.source-combo span { margin-left: 1px; padding-bottom: 1px; letter-spacing: .05px; }
.search-row { display: flex; align-items: center; height: 23px; margin: 8px 0 0 8px; }
.search-box { width: 186px; height: 23px; border: 1px solid #c6c6c6; border-radius: 2px; padding: 0 7px 0 6px; color: #a3a3a3; display: flex; align-items: center; justify-content: space-between; margin-right: 4px; }
.search-row i { width: 1px; height: 18px; background: #d4d4d4; margin: 0 6px; }
.view-caret { margin-left: 9px; color: #555; }
.data-pane h3 { margin: 0; height: 29px; padding: 7px 0 0 18px; font-size: 13px; line-height: 18px; font-weight: 600; color: #000; }
.list-zone { flex: 1; display: flex; justify-content: space-between; height: 457px; }
.field-list { width: 242px; margin-top: 0; color: #222; }
.field { height: 21px; line-height: 21px; display: flex; align-items: center; padding-left: 36px; position: relative; }
.field em { width: 26px; color: #3a7e98; font-style: normal; font-weight: 600; font-size: 9.500px; letter-spacing: .1px; }
.field em svg { margin-left: 2px; }
.field em .calc { margin-left: -1px; }
.field .dim { color: #3a83a5; }
.field .mea { color: #3aa67a; }
.field.gen span { font-style: italic; letter-spacing: .43px; }
.expander { position: absolute; left: 24px; top: 6px; }
.rule { height: 2px; margin-left: 30px; border-bottom: 1px solid #dcdcdc; }
.group { margin-top: 9px; height: 21px; display: flex; align-items: center; padding-left: 7px; font-weight: 600; color: #000; }
.group svg + svg { margin-left: 9px; }
.group span { margin-left: 13px; }
.loose { margin-top: 9px; }
.loose .field { padding-left: 21px; }
.loose .rule { margin-left: 15px; }
.scrollbar { width: 15px; margin-right: 1px; background: #f0f0f0; display: flex; flex-direction: column; align-items: center; padding: 7px 0 5px; }
.thumb { width: 15px; height: 215px; background: #cdcdcd; margin-top: auto; margin-bottom: 6px; }

.cards { width: 166px; padding: 0 6px; display: flex; flex-direction: column; gap: 6px; }
.card { background: #fafafa; border: 1px solid #d0d0d0; padding: 6px 6px 0; line-height: 17px; color: #444; }
.pages { height: 62px; }
.filters { height: 78px; }
.marks { height: 287px; border-color: #b0b0b0; }
.marks-head { display: flex; justify-content: space-between; align-items: center; height: 17px; margin-right: -1px; }
.mark-type { height: 21px; width: 140px; margin-top: 12px; padding-left: 12px; }
.mark-type i { width: 10px; height: 10px; border: 1px solid #aaa; margin-right: 7px; }
.mark-type span { letter-spacing: -.4px; color: #666; }
.mark-grid { display: grid; grid-template-columns: 43px 42px 43px; column-gap: 6px; row-gap: 6px; margin-top: 6px; width: 140px; }
.mark-grid div { height: 42px; border: 1px solid #d0d0d0; display: grid; grid-template-rows: 25px 13px; place-items: center; font-size: 11px; line-height: 13px; color: #222; }
.pill-list { margin-top: 9px; display: grid; gap: 3px; width: 136px; }
.pill-list div { height: 20px; display: grid; grid-template-columns: 26px 111px; align-items: center; justify-items: center; margin-left: -1px; }
.pill-list svg { margin-left: 3px; }
.pill { width: 111px; height: 20px; line-height: 19px; border-radius: 10px; color: #fff; padding-left: 11px; letter-spacing: .2px; }
.green { background: #00b180; }
.blue { background: #4996b2; }

.canvas { width: 934px; display: flex; flex-direction: column; gap: 6px; }
.shelf { width: 926px; height: 28px; background: #fafafa; border: 1px solid #d0d0d0; }
.shelf div { width: 125px; height: 26px; border-right: 1px solid #d0d0d0; display: flex; align-items: center; gap: 7px; padding: 0 0 1px 6px; color: #444; }
.sheet { width: 768px; height: 519px; background: #fff; border: 1px solid #d0d0d0; padding: 11px 0 0 14px; }
.sheet h1 { margin: 0 0 0 -4px; height: 41px; line-height: 28px; font-weight: 300; font-size: 20px; letter-spacing: .3px; color: #333; }
.treemap { width: 735px; height: 451px; display: grid; grid-template: 254px 196px / 425px 158px 150px; gap: 1px; }
.tile { display: grid; place-content: center; text-align: center; line-height: 26px; font-size: 19px; letter-spacing: .3px; -webkit-text-stroke: .35px currentColor; color: #000; padding: 0 1px 18px 0; }
.elite { background: #2c5985; color: #fff; }
.premium { background: #62afc3; }
.presidential { background: #a6d8d4; grid-row: 1 / 3; grid-column: 2; }
.standard { background: #bce4d8; grid-row: 1 / 3; grid-column: 3; }

.sheet-tabs { height: 30px; background: #e6e6e6; border-top: 1px solid #c8c8c8; display: flex; color: #666; }
.stab { border-right: 1px solid #c8c8c8; line-height: 30px; padding-left: 6px; font-size: 12px; }
.source { width: 131px; display: flex; align-items: center; gap: 6px; padding-left: 9px; }
.source svg { margin-top: -4px; }
.t1 { width: 132px; letter-spacing: -.07px; }
.t2 { width: 139px; padding-left: 5px; letter-spacing: -.05px; }
.t3 { width: 139px; padding-left: 5px; letter-spacing: -.08px; }
.active { width: 145px; background: #fafafa; font-weight: 600; color: #444; line-height: 28px; padding-left: 5px; letter-spacing: -.08px; }
.add { width: 32px; display: grid; place-items: center; padding: 0 0 0 1px; }

.statusbar { height: 21px; background: #ebebeb; border-top: 1px solid #d0d0d0; display: flex; align-items: center; font-size: 11px; padding-left: 3px; }
.s2 { margin-left: 16px; letter-spacing: -.25px; } .s3 { margin-left: 17px; letter-spacing: .06px; }
.status-cells { margin-left: auto; width: 367px; height: 20px; display: grid; grid-template-columns: 127px 27px 27px 47px 71px 68px; }
.status-cells > * { border-left: 1px solid #c8c8c8; }
.nav, .views { display: grid; place-items: center; }

.taskbar { height: 40px; background: linear-gradient(90deg, #21373f, #20343f 50%, #1b2941 80%, #1a2642); display: flex; color: #fff; }
.task { width: 49px; display: grid; place-items: center; position: relative; }
.task:first-child { width: 48px; }
.task:nth-child(2), .task:nth-child(3) { width: 48px; }
.task:nth-child(4) { width: 54px; }
.task:nth-child(5) { width: 44px; margin-right: -1px; }
.task:nth-child(6) { width: 54px; }
.task:nth-child(7) { width: 48px; }
.task:nth-child(8) { width: 46px; }
.task:nth-child(9) { width: 54px; }
.task:nth-child(10) { width: 44px; }
.run::after { content: ""; position: absolute; left: 2px; bottom: 0; width: 40px; height: 2px; background: #76b9ed; }
.task.front { width: 44px; margin-left: 3px; background: #4b5d65; border-bottom: 2px solid #76b9ed; }
.tab-tile { background: #f4f4f4; width: 23px; height: 23px; display: grid; place-items: center; margin-left: 3px; }
.stack { width: 4px; background: #3d4c54; border-left: 1px solid #263840; border-bottom: 2px solid #5c9ccc; }
.count { position: absolute; width: 18px; height: 18px; border: 1px solid #9aa4a8; border-radius: 50%; background: #2d3a41; font-size: 12px; font-weight: 600; line-height: 15px; text-align: center; letter-spacing: -.3px; }
.task .count { left: 26px; top: 17px; }
.tray { margin-left: auto; width: 405px; padding-left: 1px; display: grid; align-items: center; grid-template-columns: 30px 100px 22px 25px 26px 22px 19px 38px 66px 52px; justify-items: start; border-right: 0; }
.weather { font-size: 13.500px; }
.lang, .clock { font-size: 12px; line-height: 18px; text-align: center; justify-self: center; letter-spacing: -.45px; padding-bottom: 2px; }
.notes { position: relative; margin-left: 15px; }
.notes .count { left: 6px; top: 7px; }

.show-me { position: absolute; left: 1158px; top: 48px; width: 204px; height: 592px; display: flex; flex-direction: column; filter: drop-shadow(2px 2px 2px rgba(0,0,0,.35)); }
.sm-tab { height: 37px; width: 111px; align-self: flex-end; background: #fafafa; border: 1px solid #e0e0e0; border-bottom: 0; display: flex; align-items: center; gap: 5px; padding: 0 0 8px 11px; font-size: 13px; color: #111; }
.sm-tab svg { margin-top: 2px; }
.sm-body { height: 556px; margin-top: -1px; background: #fafafa; border-left: 1px solid #dedede; padding: 15px 0 0 13px; }
.thumbs { display: grid; grid-template-columns: repeat(3, 56px); grid-auto-rows: 42px; gap: 4px; }
.thumbs svg { width: 56px; height: 42px; background: #fff; box-shadow: inset 0 0 0 1px #dedede; overflow: hidden; }
.thumbs .selected { box-shadow: inset 0 0 0 2px #dd6b35; }
.tiny { font-family: "Liberation Serif", serif; font-size: 17px; fill: #666; }
.map-gray { color: #f2f2f2; }
.map-pink { color: #ffdedc; }
.rings { fill: none; stroke-width: 4; }
.lines { fill: none; stroke-width: 4; }
.hint, .need { margin: 0; padding-left: 2px; font-size: 11.500px; color: #111; }
.hint { margin-top: 17px; line-height: 17px; }
.hint strong { font-weight: 600; letter-spacing: .1px; }
.need { height: 20px; margin-top: 7px; line-height: 23px; display: flex; gap: 3px; letter-spacing: .08px; }
.need.second { margin-top: 8px; line-height: 24px; gap: 1px; }
.chip { height: 20px; line-height: 20px; padding: 0 13px 0 10px; border-radius: 10px; color: #fff; font-size: 12px; letter-spacing: .12px; }
.activation { position: absolute; left: 1073px; top: 650px; color: rgba(145,145,145,.6); font-size: 19px; line-height: 24px; }
.activation p { margin: 0; font-size: 14.400px; line-height: 21px; }
```
